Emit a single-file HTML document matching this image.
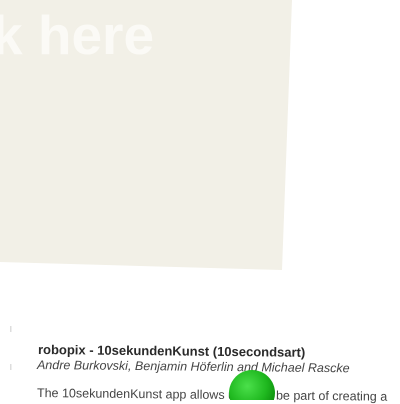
<!DOCTYPE html>
<html><head><style>
body{margin:0;width:400px;height:400px;overflow:hidden;background:#fff;font-family:"Liberation Sans",sans-serif;position:relative}
.t{position:absolute;white-space:nowrap;color:#333}
</style></head><body>
<svg width="400" height="400" style="position:absolute;left:0;top:0">
<polygon points="0,0 292,0 282,270 0,262" fill="#f2f0e7"/>
<text x="-8" y="54" font-family="Liberation Sans" font-weight="bold" font-size="55" fill="#fbfaf6">k here</text>
<rect x="10" y="326" width="1.5" height="6" fill="#ddd"/>
<rect x="10" y="364" width="1.5" height="6" fill="#ddd"/>
</svg>
<div class="t" style="left:38px;top:342px;font-weight:bold;font-size:13px;color:#2a2a2a;transform:rotate(0.6deg);transform-origin:left">robopix - 10sekundenKunst (10secondsart)</div>
<div class="t" style="left:37px;top:358px;font-style:italic;font-size:12.5px;color:#444;transform:rotate(0.6deg);transform-origin:left">Andre Burkovski, Benjamin Höferlin and Michael Rascke</div>
<div class="t" style="left:37px;top:386px;font-size:12.5px;color:#444;transform:rotate(0.6deg);transform-origin:left">The 10sekundenKunst app allows users to be part of creating a</div>
<svg width="400" height="400" style="position:absolute;left:0;top:0"><defs><radialGradient id="g2" cx="0.4" cy="0.35" r="0.7"><stop offset="0" stop-color="#4be04b"/><stop offset="0.6" stop-color="#1fb81f"/><stop offset="1" stop-color="#0a8a0a"/></radialGradient></defs><circle cx="252" cy="393" r="23" fill="url(#g2)"/></svg>
</body></html>
